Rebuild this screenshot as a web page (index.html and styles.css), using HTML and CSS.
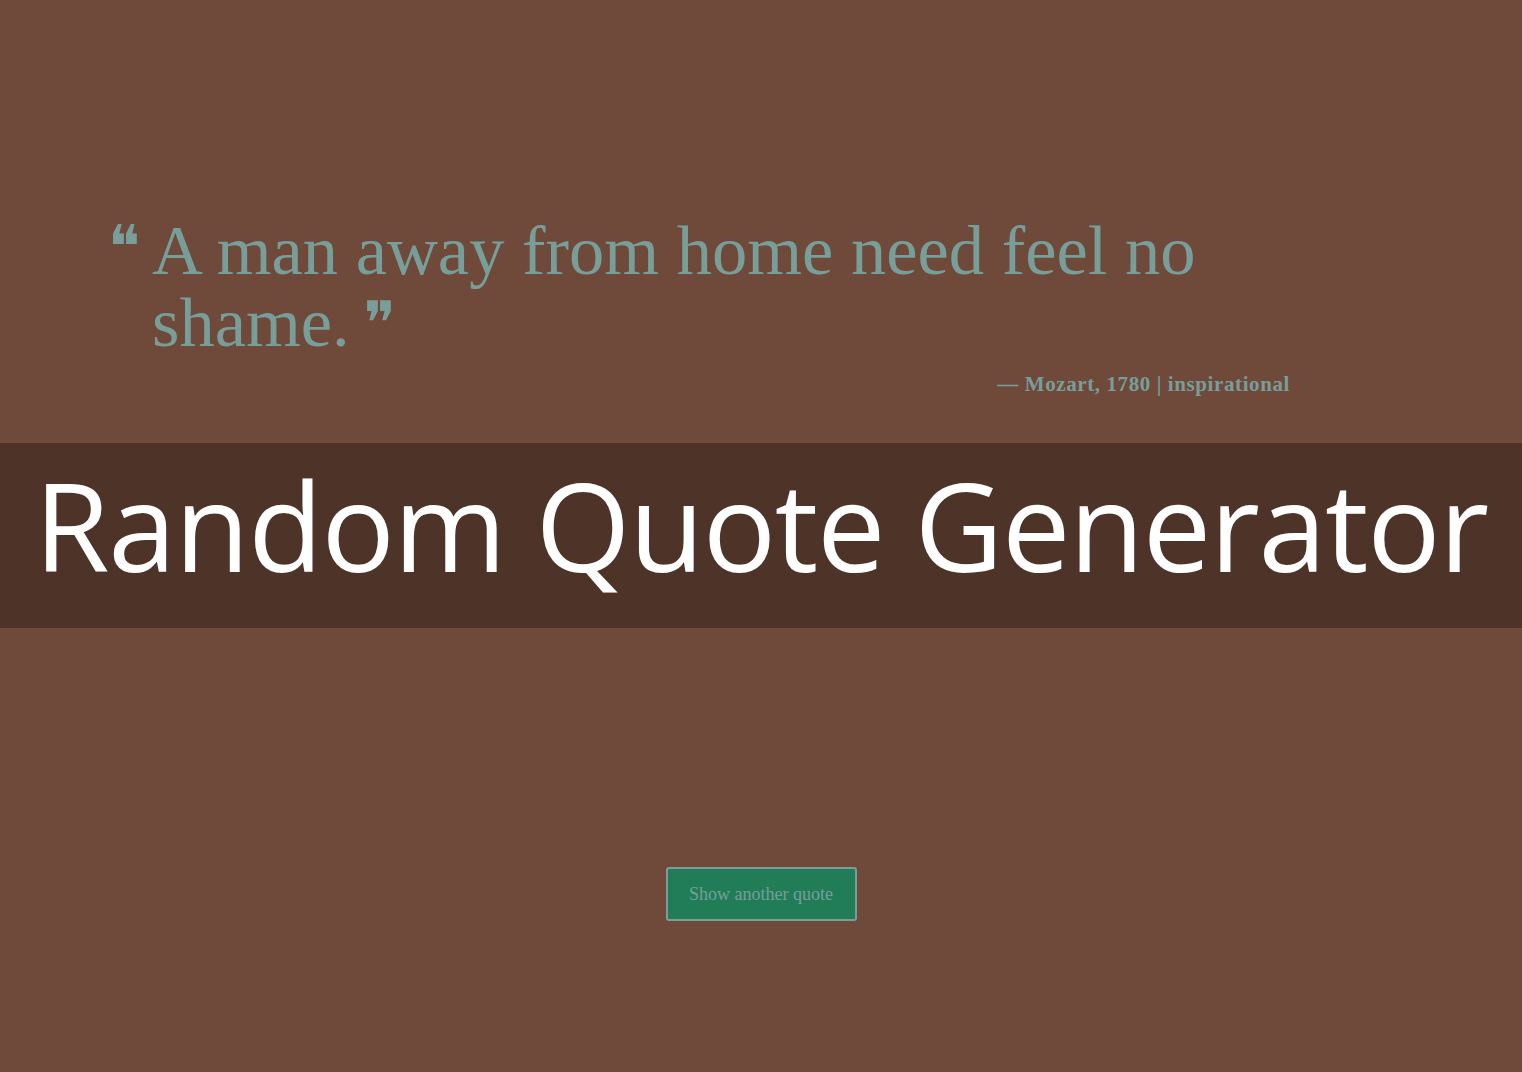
FILE: index.html
```html
<!DOCTYPE html>
<html lang="en">
<head>
<meta charset="utf-8">
<title>Random Quote Generator</title>
<link rel="stylesheet" href="styles.css">
</head>
<body>
<main class="page">
  <section class="quote-area">
    <blockquote class="quote">
      <span class="mark open">❝</span>
      <p class="quote-text">A man away from home need feel no shame.<span class="mark close">❞</span></p>
    </blockquote>
    <p class="source">— Mozart, 1780 | inspirational</p>
  </section>
  <header class="band">
    <h1 class="title">Random Quote Generator</h1>
  </header>
  <section class="actions">
    <button class="btn" type="button">Show another quote</button>
  </section>
</main>
</body>
</html>
```
FILE: styles.css
```css
html, body {
  margin: 0;
  padding: 0;
}
body {
  background: #6f4a3a;
  color: #789e9a;
  font-family: "Liberation Serif", serif;
}
.page {
  display: flex;
  flex-direction: column;
  min-height: 1072px;
}
.quote-area {
  height: 443px;
  box-sizing: border-box;
  padding: 214px 232px 0 108px;
}
.quote {
  margin: 0;
  display: flex;
  align-items: flex-start;
}
.mark {
  font-family: "DejaVu Sans", sans-serif;
  font-size: 60px;
  line-height: 1;
  color: #789e9a;
}
.mark.open {
  width: 44px;
  flex: none;
  margin-top: 3px;
  height: 40px;
}
.mark.close {
  margin-left: 14px;
  vertical-align: 2px;
  line-height: 0;
}
.quote-text {
  margin: 0;
  font-family: "Liberation Serif", serif;
  font-size: 70.5px;
  line-height: 72px;
  color: #789e9a;
}
.source {
  margin: 14px 0 0;
  text-align: right;
  font-family: "Liberation Serif", serif;
  font-weight: bold;
  font-size: 21px;
  letter-spacing: 0.6px;
  color: #789e9a;
}
.band {
  background: #4d3328;
  height: 185px;
  box-sizing: border-box;
  padding-bottom: 22px;
  display: flex;
  align-items: center;
  justify-content: center;
  overflow: hidden;
}
.title {
  margin: 0;
  font-family: "Open Sans", sans-serif;
  font-weight: normal;
  font-size: 122px;
  line-height: 1;
  color: #ffffff;
  letter-spacing: -1.3px;
  white-space: nowrap;
}
.actions {
  flex: 1;
  display: flex;
  justify-content: center;
  align-items: flex-start;
  padding-top: 239px;
}
.btn {
  width: 191px;
  height: 54px;
  background: #207d58;
  border: 2px solid #789e9a;
  border-radius: 3px;
  color: #789e9a;
  font-family: "Liberation Serif", serif;
  font-size: 18px;
  cursor: pointer;
}
```
